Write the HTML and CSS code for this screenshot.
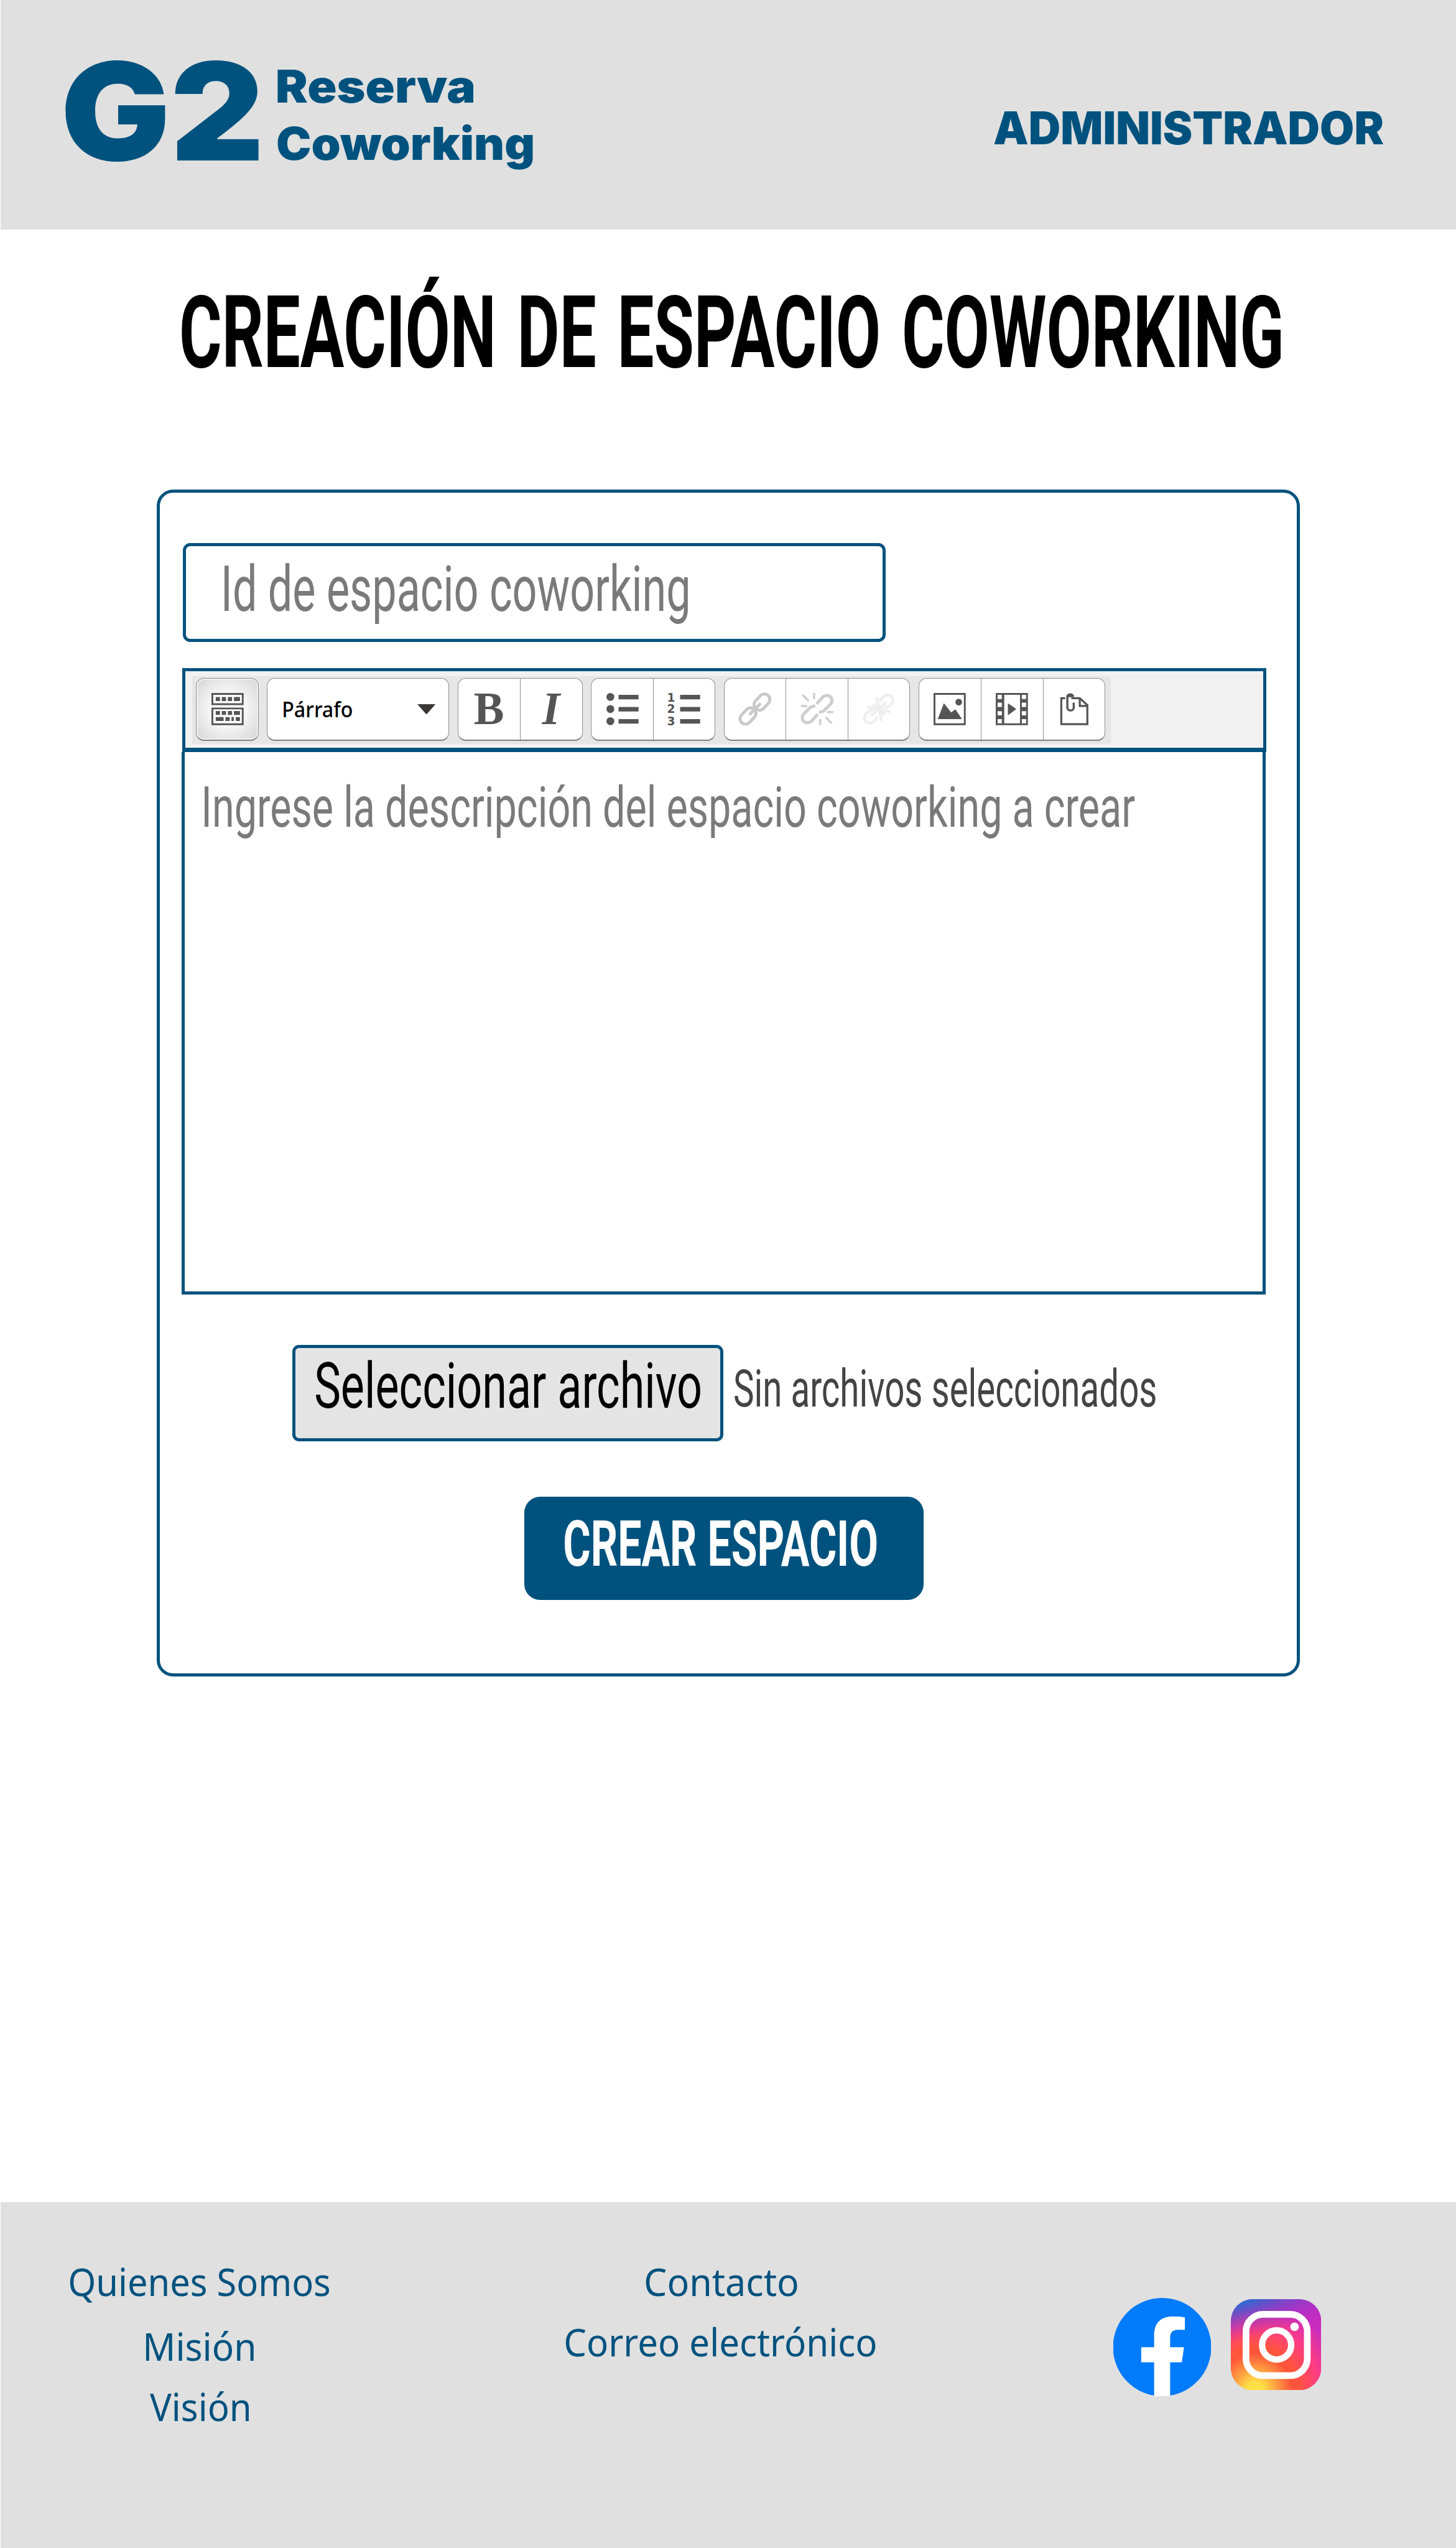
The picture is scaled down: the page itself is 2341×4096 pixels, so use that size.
FILE: index.html
```html
<!DOCTYPE html>
<html lang="es">
<head>
<meta charset="utf-8">
<title>Reserva Coworking</title>
<link rel="stylesheet" href="styles.css">
</head>
<body>
<header class="header">
  <div class="brand">
    <span class="label brand-mark"><span class="fit">G2</span></span>
    <span class="brand-name">
      <span class="label brand-line brand-top"><span class="fit">Reserva</span></span>
      <span class="label brand-line brand-bottom"><span class="fit">Coworking</span></span>
    </span>
  </div>
  <span class="label role"><span class="fit">ADMINISTRADOR</span></span>
</header>
<main class="main">
  <h1 class="label title"><span class="fit">CREACIÓN DE ESPACIO COWORKING</span></h1>
  <form class="card">
    <div class="field"><span class="label field-text"><span class="fit">Id de espacio coworking</span></span></div>
    <div class="toolbar">
      <div class="strip">
        <div class="group group-toggle">
          <div class="tool"><svg class="icon" viewBox="0 0 53 53"><path d="M1.500 1.500h50v17h-50zM1.500 25.500h50v26h-50z" fill="#fff" stroke="#555" stroke-width="3"/><path d="M7 10h7M17 10h7M27 10h7M37 10h10M7 33h7M17 33h7M27 33h7M37 33h10M7 43h13M23 43h7M33 43h4M40 43h7" stroke="#555" stroke-width="6.500"/></svg></div>
        </div>
        <div class="group group-format">
          <span class="label format-text"><span class="fit">Párrafo</span></span>
          <svg class="caret" viewBox="0 0 30 17"><path d="M0 0h30L15 17z" fill="#3a3836"/></svg>
        </div>
        <div class="group group-style">
          <div class="tool serif bold">B</div><div class="tool serif italic">I</div>
        </div>
        <div class="group group-list">
          <div class="tool"><svg class="icon" viewBox="0 0 53 53"><g fill="#555"><circle cx="6.500" cy="6.500" r="6.500"/><circle cx="6.500" cy="26.500" r="6.500"/><circle cx="6.500" cy="46.500" r="6.500"/><path d="M20 3h33v7.500H20zM20 23h33v7.500H20zM20 43h33v7.500H20z"/></g></svg></div>
          <div class="tool"><svg class="icon" viewBox="0 0 53 53"><g fill="#555"><path d="M20 3h33v7.500H20zM20 23h33v7.500H20zM20 43h33v7.500H20z"/><g class="numerals"><text x="-1.500" y="14">1</text><text x="-1.500" y="33">2</text><text x="-1.500" y="53">3</text></g></g></svg></div>
        </div>
        <div class="group group-link">
          <div class="tool"><svg class="icon" viewBox="0 0 53 53"><g fill="none" stroke="#c9c9c9" stroke-width="5"><rect x="-15" y="-9" width="30" height="18" rx="9" transform="translate(38 15) rotate(-47)"/><rect x="-15" y="-9" width="30" height="18" rx="9" transform="translate(15 38) rotate(-47)"/><path d="M18.500 34.500L34.500 18.500" stroke-linecap="round"/></g></svg></div>
          <div class="tool"><svg class="icon" viewBox="0 0 53 53"><g fill="none" stroke="#cdcdcd" stroke-width="5"><path d="M25.500 18L35 7.500C44 -1.500 57 9 48 19L38 29Q34.500 32 29.500 31"/><path d="M27.500 35L18 45.500C9 54.500-4 44 5 34L15 24Q18.500 21 23.500 22"/><path d="M2.500 3l10 10M21.500 0v10M0 21.500h10M50.500 50l-10-10M31.500 53V43M53 31.500H43" stroke-width="3.500"/></g></svg></div>
          <div class="tool"><svg class="icon" viewBox="0 0 53 53"><g fill="none" stroke="#efefef" stroke-width="5"><path d="M28 14L33 7C42-2 56 8 47 19Q41 25 35 24"/><path d="M25 39L20 46C11 55-3 45 6 34Q12 28 18 29"/><path d="M23 7L31 46M7 23L46 31M14 38L39 15M17 18L37 36"/></g></svg></div>
        </div>
        <div class="group group-media">
          <div class="tool"><svg class="icon" viewBox="0 0 53 53"><path d="M1.500 1.500h50v50h-50z" fill="none" stroke="#555" stroke-width="3"/><g fill="#555"><path d="M7 43L17 17L29 32L36 27L47 43z"/><circle cx="41.500" cy="15" r="5.500"/></g></svg></div>
          <div class="tool"><svg class="icon" viewBox="0 0 53 53"><path d="M0 0h53v53H0zM14 3v47h26V3zM3 3v7h7V3zM3 16v7h7v-7zM3 30v7h7v-7zM3 43v7h7v-7zM43 3v7h7V3zM43 16v7h7v-7zM43 30v7h7v-7zM43 43v7h7v-7z" fill="#555" fill-rule="evenodd"/><path d="M20 17l14 9.500L20 37z" fill="#555"/></svg></div>
          <div class="tool"><svg class="icon" viewBox="0 0 53 53"><path d="M12 8.500H5.500V51.500H48.500V20L36 8.500H22M36 8.500V21.500H48.500" fill="none" stroke="#555" stroke-width="3.300"/><path d="M15.500 18V24C15.500 30.500 26 30.500 26 24V16M15.500 20V6C15.500 1 25 1 25 6" fill="none" stroke="#555" stroke-width="3.500"/><path d="M15 7C15-1 26-1 26 7z" fill="#555"/></svg></div>
        </div>
      </div>
    </div>
    <div class="editor"><span class="label editor-text"><span class="fit">Ingrese la descripción del espacio coworking a crear</span></span></div>
    <div class="file-row">
      <div class="file-button"><span class="label file-button-text"><span class="fit">Seleccionar archivo</span></span></div>
      <span class="label file-status"><span class="fit">Sin archivos seleccionados</span></span>
    </div>
    <div class="submit"><span class="label submit-text"><span class="fit">CREAR ESPACIO</span></span></div>
  </form>
</main>
<footer class="footer">
  <nav class="links links-about">
    <a class="label link about"><span class="fit">Quienes Somos</span></a>
    <a class="label link mission"><span class="fit">Misión</span></a>
    <a class="label link vision"><span class="fit">Visión</span></a>
  </nav>
  <nav class="links links-contact">
    <a class="label link contact"><span class="fit">Contacto</span></a>
    <a class="label link mail"><span class="fit">Correo electrónico</span></a>
  </nav>
  <div class="social">
    <svg class="facebook" viewBox="0 0 161 162"><circle cx="80.500" cy="81" r="81" fill="#007bfb"/><path d="M67.300 162V106H46V81.300H67.300V62C67.300 41 78 30.500 99 30.500Q109 30.500 118 32V52.500H107Q93.700 52.500 93.700 65V81.300H116.500L113 106H93.700V162z" fill="#fff"/></svg>
    <svg class="instagram" viewBox="0 0 149 150"><defs>
      <radialGradient id="warm" gradientUnits="userSpaceOnUse" cx="40" cy="150" r="145"><stop offset="0" stop-color="#ffe545"/><stop offset=".1" stop-color="#ffdc47"/><stop offset=".42" stop-color="#ff543a"/><stop offset=".5" stop-color="#ff543e"/><stop offset=".72" stop-color="#ff3d82"/><stop offset="1" stop-color="#c72cc0"/></radialGradient>
      <radialGradient id="cool" gradientUnits="userSpaceOnUse" cx="0" cy="0" r="1" gradientTransform="matrix(14 72 -300 58 -15 0)"><stop offset="0" stop-color="#1272d0"/><stop offset=".18" stop-color="#2a6bd0"/><stop offset="1" stop-color="#b01fc8" stop-opacity="0"/></radialGradient></defs>
      <rect width="149" height="150" rx="36" fill="url(#warm)"/><rect width="149" height="150" rx="36" fill="url(#cool)"/>
      <rect x="25" y="25" width="101" height="101" rx="28" fill="none" stroke="#fff" stroke-width="11"/><circle cx="75.500" cy="75.500" r="24" fill="none" stroke="#fff" stroke-width="10.500"/><circle cx="105" cy="45.500" r="7" fill="#fff"/></svg>
  </div>
</footer>
</body>
</html>
```
FILE: styles.css
```css
/* 1rem is a 240th of the window's width */
html { font-size: calc(100vw / 240); }
body { margin: 0; background: #fff; color: #000; font-family: Roboto, "Liberation Sans", sans-serif; }
* { box-sizing: border-box; }

/* Condensed lettering: each label narrows its text with its own scale and shift */
.label { display: block; flex: none; margin: 0; line-height: 1; white-space: nowrap; }
.fit { display: block; width: max-content; transform: translateX(var(--shift, 0)) scaleX(var(--narrow, 1)); transform-origin: 0 50%; }

.header { display: flex; justify-content: space-between; align-items: flex-start; height: 37.8rem; padding: 0 12rem 0 10.7rem; border-left: 1px solid #fff; background: #e0e0e0; color: #00527e; font-family: Inter, sans-serif; font-weight: 900; }
.brand { display: flex; gap: 3rem; }
.brand-mark { --narrow: 1.0699; --shift: -0.768rem; width: 31.9rem; margin-top: 7.15rem; font-size: 22.4rem; }
.brand-name { display: flex; flex-direction: column; gap: 2rem; padding-top: 10.42rem; }
.brand-line { font-size: 7.5rem; }
.brand-top { --narrow: 1.0684; --shift: -0.329rem; width: 32.3rem; }
.brand-bottom { --narrow: 1.0339; --shift: -0.212rem; width: 42.1rem; }
.role { --narrow: 0.975; --shift: -0.1rem; width: 64.2rem; margin-top: 17.32rem; font-size: 7.5rem; }

.main { display: flex; flex-direction: column; height: 325.1rem; padding: 8.83rem 25.7rem 0 25.8rem; overflow: hidden; }
.title { --narrow: 0.6474; --shift: -0.4rem; width: 181.2rem; margin-left: 4.1rem; font-size: 16.6rem; font-weight: 700; word-spacing: 12px; }

.card { display: flex; flex-direction: column; height: 195.6rem; margin-top: 17.47rem; padding: 8.3rem 0 0 3.6rem; border: 5px solid #00527e; border-radius: 2.7rem; }
.field { width: 115.9rem; height: 16.3rem; margin-left: 0.2rem; padding: 1.86rem 0 0 6.4rem; border: 5px solid #00527e; border-radius: 1.2rem; color: #7a7a7a; }
.field-text { --narrow: 0.6846; --shift: -0.632rem; width: 76.4rem; font-size: 10.5rem; }

.toolbar { width: 178.7rem; height: 13.8rem; margin: 4.3rem 0 0 0.1rem; padding: 0.8rem 0 0 1.2rem; border: 5px solid #00527e; border-bottom-width: 7px; background: #f1f1f1; }
.strip { display: flex; align-items: flex-start; gap: 1.4rem; width: 151.4rem; height: 11.2rem; padding: 0.3rem 0 0 0.6rem; background: #e6e6e6; }
.group { display: flex; flex: none; height: 10.4rem; border: 1px solid #909090; border-bottom: 2px solid #808080; border-radius: 1.3rem; background: #fff; }
.tool { display: flex; flex: 1; align-items: center; justify-content: center; color: #555; }
.tool + .tool { border-left: 1px solid #909090; }
.icon { width: 5.3rem; height: 5.3rem; overflow: visible; }
.numerals { font-family: "DejaVu Sans", sans-serif; font-weight: 700; font-size: 19px; }
.group-toggle { width: 10.3rem; background: radial-gradient(circle, #fff 25%, #d4d4d4 100%); box-shadow: inset 0 0 0 2px #f2f2f2; }
.group-format { width: 30rem; align-items: center; justify-content: space-between; padding: 0 2.1rem 0 2.6rem; color: #000; font-family: "Noto Sans", "Open Sans", sans-serif; font-weight: 500; }
.format-text { --narrow: 0.925; --shift: -0.287rem; width: 11.2rem; font-size: 3.57rem; }
.caret { width: 3rem; height: 1.7rem; }
.group-style { width: 20.6rem; }
.group-list { width: 20.5rem; }
.group-link { width: 30.7rem; }
.group-media { width: 30.8rem; }
.serif { font-family: "Liberation Serif", serif; font-size: 7.5rem; line-height: 1; }
.bold { font-weight: 700; }
.italic { font-style: italic; font-weight: 700; }

.editor { width: 178.7rem; height: 89.4rem; padding: 4.49rem 0 0 3.3rem; border: 5px solid #00527e; border-top: 0; color: #7a7a7a; }
.editor-text { --narrow: 0.705; --shift: -0.578rem; width: 153.3rem; font-size: 9.4rem; }

.file-row { display: flex; gap: 1.9rem; margin: 8.3rem 0 0 18.3rem; }
.file-button { width: 71rem; height: 15.9rem; padding: 1.06rem 0 0 3.4rem; border: 5px solid #00527e; border-radius: 1.1rem; background: #e4e4e4; }
.file-button-text { --narrow: 0.7019; --shift: -0.288rem; width: 63.35rem; font-size: 10.5rem; }
.file-status { --narrow: 0.6813; --shift: -0.21rem; width: 69.4rem; margin-top: 3.1rem; color: #444; font-size: 8.5rem; }
.submit { width: 65.8rem; height: 17rem; margin: 9.2rem 0 0 56.5rem; padding: 2.65rem 0 0 6.7rem; border-radius: 2.6rem; background: #00527e; color: #fff; font-weight: 700; }
.submit-text { --narrow: 0.6696; --shift: -0.275rem; width: 51.4rem; font-size: 10.4rem; }

.footer { display: flex; height: 57.1rem; padding: 10rem 0 0 11.4rem; border-left: 1px solid #fff; background: #e0e0e0; color: #00527e; font-family: "Noto Sans", "Open Sans", sans-serif; }
.links { display: flex; flex-direction: column; align-items: center; }
.link { font-size: 6.3rem; }
.links-about { width: 42.8rem; }
.links-contact { width: 51.1rem; margin-left: 38.9rem; }
.about { --narrow: 0.9403; --shift: -0.289rem; width: 42.8rem; }
.mission { --narrow: 0.9538; --shift: -0.489rem; width: 17.8rem; margin-top: 4.3rem; }
.vision { --narrow: 0.9454; width: 16.3rem; margin-top: 3.7rem; }
.contact { --narrow: 0.9627; --shift: -0.1rem; width: 25rem; }
.mail { --narrow: 0.948; --shift: -0.292rem; width: 51.1rem; margin-top: 3.6rem; }
.social { display: flex; gap: 3.3rem; margin-left: 39.2rem; padding-top: 5.8rem; }
.facebook { width: 16.1rem; height: 16.2rem; }
.instagram { width: 14.9rem; height: 15rem; margin-top: 0.2rem; }
```
